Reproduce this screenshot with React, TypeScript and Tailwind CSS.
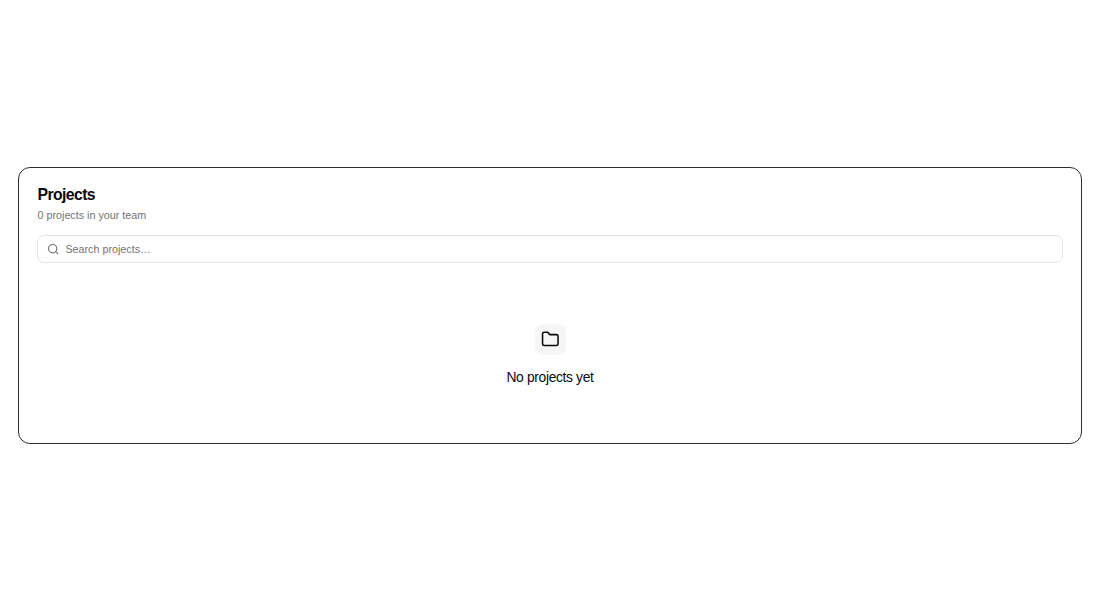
import { Folder, Search } from "lucide-react";

export default function App() {
  return (
    <div className="flex min-h-screen items-center bg-white p-[18px] font-['Liberation_Sans',Arial,sans-serif] text-[#0a0a0a]">
      <section className="flex h-[277px] w-full flex-col rounded-[12px] border border-[#2e2e2e] px-[18px] pt-[18px]">
        <h1 className="pl-[0.5px] text-[15.75px] leading-[18px] font-semibold tracking-[-0.58px]">Projects</h1>
        <p className="mt-[3px] pl-[0.5px] text-[10.75px] leading-[16px] text-[#737373]">0 projects in your team</p>
        <div className="mt-3 flex h-7 items-center gap-[6px] rounded-[7px] border border-[#e5e5e5] pr-[9px] pl-[9px]">
          <Search className="size-[12.4px] text-[#737373]" strokeWidth={2.2} />
          <input
            type="text"
            placeholder="Search projects…"
            className="min-w-0 flex-1 text-[10.75px] outline-none placeholder:text-[#737373]"
          />
        </div>
        <div className="flex flex-col items-center gap-3 pt-[61px]">
          <div className="flex size-[31px] items-center justify-center rounded-[8px] bg-[#f6f6f6]">
            <Folder className="size-[18.6px]" />
          </div>
          <p className="text-[13.85px] leading-5 tracking-[-0.35px]">No projects yet</p>
        </div>
      </section>
    </div>
  );
}
